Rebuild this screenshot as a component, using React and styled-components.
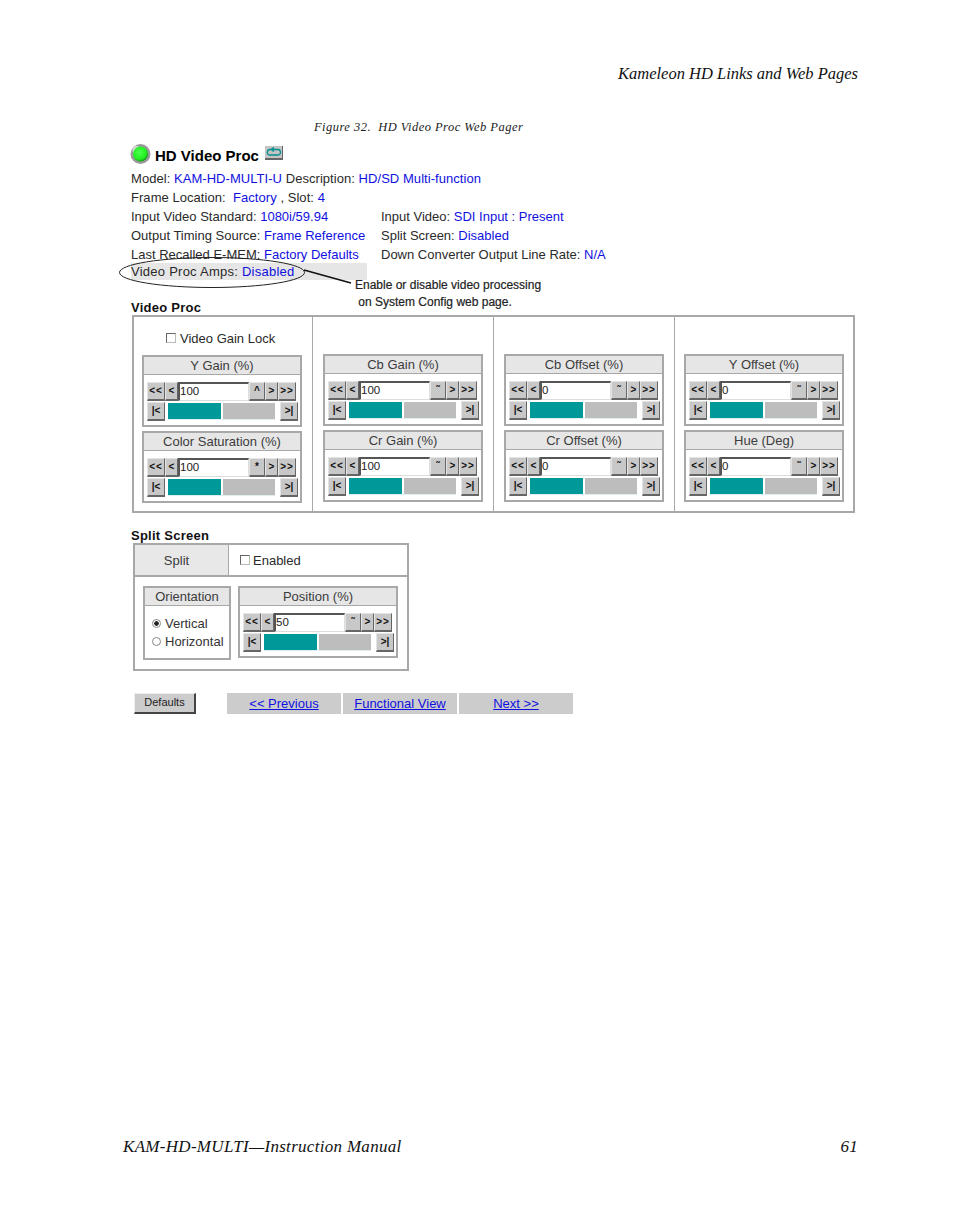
import React from "react";
import styled, { createGlobalStyle } from "styled-components";

const Global = createGlobalStyle`
  html, body { margin: 0; padding: 0; background: #fff; }
  * { box-sizing: border-box; }
`;

const Page = styled.div`
  position: relative;
  width: 954px;
  height: 1227px;
  padding: 64px 96px 0 123px;
  font-family: "Liberation Sans", Arial, sans-serif;
  font-size: 13px;
  color: #2a2a2a;
  display: flex;
  flex-direction: column;
`;
const RunHead = styled.div`
  font: italic 16.5px/20px "Liberation Serif", serif;
  color: #111;
  text-align: right;
`;
const Caption = styled.div`
  margin: 35px 0 0 191px;
  font: italic 12.5px/16px "Liberation Serif", serif;
  color: #222;
  letter-spacing: 0.47px;
`;
const Shot = styled.div`
  margin: 7px 0 0 7px;
  display: flex;
  flex-direction: column;
`;
const TitleRow = styled.div`
  display: flex;
  align-items: center;
  height: 24px;
  gap: 4px;
`;
const Title = styled.span`
  font-size: 15px;
  font-weight: 700;
  color: #000;
  padding-top: 2px;
  margin-right: 2px;
`;
const InfoLines = styled.div`
  margin: 3px 0 0 1px;
`;
const Info = styled.div`
  display: flex;
  height: ${(p) => p.$h || 18.9}px;
  align-items: center;
  white-space: pre;
  width: ${(p) => p.$w || "auto"};
  background: ${(p) => p.$bg || "transparent"};
  letter-spacing: ${(p) => p.$ls || 0.05}px;
`;
const InfoCell = styled.div`
  width: 250px;
  white-space: pre;
`;
const Val = styled.span`
  color: #1010e0;
`;
const Ring = styled.svg`
  position: absolute;
  left: 119px;
  top: 256px;
`;
const Note = styled.div`
  position: absolute;
  left: 355px;
  top: 277px;
  font-size: 12px;
  line-height: 17px;
  color: #222;
  white-space: pre;
  -webkit-text-stroke: 0.2px #222;
`;
const SectionTitle = styled.div`
  font-size: 13px;
  font-weight: 700;
  color: #111;
  line-height: 15px;
  letter-spacing: 0.25px;
  margin: ${(p) => p.$top}px 0 0 1px;
`;
const ProcTable = styled.div`
  margin: 0 0 0 2px;
  width: 723px;
  height: 198px;
  border: 2px solid #a8a8a8;
  display: grid;
  grid-template-columns: 179px 181px 181px 1fr;
`;
const ProcCol = styled.div`
  border-right: ${(p) => (p.$last ? "0" : "1px solid #a8a8a8")};
  padding: ${(p) => (p.$top ? "0" : "37px")} 0 0 ${(p) => p.$left}px;
  display: flex;
  flex-direction: column;
  gap: 4px;
`;
const LockRow = styled.label`
  height: 34px;
  display: flex;
  align-items: center;
  gap: 4px;
  padding: 8px 0 0 24px;
`;
const Check = styled.span`
  display: inline-block;
  width: 10px;
  height: 10px;
  background: #fff;
  border: 1px solid #666;
  border-right-color: #bbb;
  border-bottom-color: #bbb;
`;
const Panel = styled.div`
  width: ${(p) => p.$w || 160}px;
  height: ${(p) => p.$h || 72}px;
  border: 2px solid #a8a8a8;
  background: #fff;
  flex: none;
`;
const PanelHead = styled.div`
  height: 18px;
  background: #e6e6e6;
  border-bottom: 1px solid #a8a8a8;
  text-align: center;
  line-height: 17px;
  font-size: 13px;
  color: #3c3c3c;
`;
const Controls = styled.div`
  padding: 7px 0 0 3px;
  display: flex;
  flex-direction: column;
  gap: 1px;
`;
const CtrlRow = styled.div`
  display: flex;
  align-items: stretch;
  height: 19px;
`;
const Btn = styled.span`
  width: ${(p) => p.$w}px;
  flex: none;
  background: #c8c8c8;
  border-top: 1px solid #e4e4e4;
  border-left: 1px solid #e4e4e4;
  border-right: 1px solid #666;
  border-bottom: 2px solid #666;
  color: #111;
  font-size: 10px;
  font-weight: 700;
  line-height: 15px;
  text-align: center;
  letter-spacing: ${(p) => p.$ls || 0}px;
  white-space: pre;
`;
const NumInput = styled.span`
  width: 71px;
  flex: none;
  background: #fff;
  border-top: 2px solid #555;
  border-left: 2px solid #555;
  border-right: 1px solid #ddd;
  border-bottom: 1px solid #ddd;
  font-size: 11.5px;
  line-height: 15px;
  color: #222;
`;
const Track = styled.div`
  display: flex;
  gap: 2px;
  margin: 1px 5px 1px 3px;
  flex: none;
  width: 107px;
  height: 17px;
  border-bottom: 1px solid #dfeeee;
`;
const Fill = styled.div`
  background: ${(p) => p.$c};
  flex: 1;
`;
const SplitTable = styled.div`
  margin: 0 0 0 3px;
  width: 276px;
  height: 128px;
  border: 2px solid #a8a8a8;
  display: flex;
  flex-direction: column;
`;
const SplitTop = styled.div`
  height: 32px;
  display: flex;
  border-bottom: 2px solid #a8a8a8;
  flex: none;
`;
const SplitLabel = styled.div`
  width: 94px;
  background: #e8e8e8;
  border-right: 1px solid #a8a8a8;
  text-align: center;
  line-height: 31px;
  padding-right: 10px;
  color: #3c3c3c;
`;
const SplitOpt = styled.div`
  display: flex;
  align-items: center;
  gap: 3px;
  padding-left: 11px;
`;
const SplitBody = styled.div`
  display: flex;
  gap: 7px;
  padding: 9px 0 0 8px;
  align-items: flex-start;
`;
const Options = styled.div`
  padding: 8px 0 0 7px;
  display: flex;
  flex-direction: column;
`;
const OptRow = styled.div`
  display: flex;
  align-items: center;
  gap: 4px;
  height: 18px;
  color: #333;
`;
const Radio = styled.span`
  width: 9px;
  height: 9px;
  border-radius: 50%;
  border: 1px solid #888;
  background: ${(p) => (p.$on ? "radial-gradient(circle, #222 0 2px, #fff 2.5px)" : "#fff")};
  flex: none;
`;
const ActionBar = styled.div`
  margin: 22px 0 0 4px;
  display: flex;
  height: 21px;
`;
const DefaultsBtn = styled.span`
  width: 62px;
  background: #ccc;
  border-top: 1px solid #eee;
  border-left: 1px solid #eee;
  border-right: 2px solid #444;
  border-bottom: 2px solid #444;
  font-size: 11px;
  line-height: 16px;
  text-align: center;
  color: #222;
  margin-right: 31px;
`;
const NavCell = styled.a`
  width: 114px;
  margin-right: 2px;
  background: #ccc;
  text-align: center;
  line-height: 21px;
  color: #1010e0;
  text-decoration: underline;
`;
const Footer = styled.div`
  position: absolute;
  left: 123px;
  right: 96px;
  top: 1137px;
  display: flex;
  justify-content: space-between;
  font: italic 17px/20px "Liberation Serif", serif;
  color: #111;
  letter-spacing: 0.3px;
`;
const LoopIcon = styled.svg`
  margin-bottom: 2px;
`;

const Led = () => (
  <svg width="21" height="22" viewBox="0 0 21 22">
    <defs>
      <radialGradient id="ledg" cx="0.42" cy="0.4" r="0.6">
        <stop offset="0" stopColor="#4dff4d" />
        <stop offset="0.75" stopColor="#22f022" />
        <stop offset="1" stopColor="#12a012" />
      </radialGradient>
    </defs>
    <circle cx="10.5" cy="11" r="10" fill="#9a9a9a" />
    <circle cx="6.5" cy="7" r="4" fill="#d8d8d8" />
    <circle cx="10.5" cy="11" r="7.5" fill="url(#ledg)" />
  </svg>
);
const Loop = () => (
  <LoopIcon width="18" height="14" viewBox="0 0 18 14">
    <rect x="0" y="0" width="18" height="14" fill="#c4c4c4" />
    <rect x="0" y="12" width="18" height="2" fill="#666" />
    <rect x="17" y="0" width="1" height="14" fill="#666" />
    <path d="M5 3.5h8c3 0 3.5 5.5 0 5.5H4.5C1.5 9 1.5 3.5 5 3.5M9 1.5L6 3.5l3 2" fill="none" stroke="#008f8f" strokeWidth="1.3" />
  </LoopIcon>
);

const Spinner = ({ title, value, mid = "^" }) => (
  <Panel>
    <PanelHead>{title}</PanelHead>
    <Controls>
      <CtrlRow>
        <Btn $w={18} $ls={1}>&lt;&lt;</Btn>
        <Btn $w={13}>&lt;</Btn>
        <NumInput>{value}</NumInput>
        <Btn $w={16}>{mid}</Btn>
        <Btn $w={13}>&gt;</Btn>
        <Btn $w={18} $ls={1}>&gt;&gt;</Btn>
      </CtrlRow>
      <CtrlRow>
        <Btn $w={18}>|&lt;</Btn>
        <Track>
          <Fill $c="#009999" />
          <Fill $c="#bdbdbd" />
        </Track>
        <Btn $w={18}>&gt;|</Btn>
      </CtrlRow>
    </Controls>
  </Panel>
);

const cols = [
  { left: 8, items: [["Y Gain (%)", "100"], ["Color Saturation (%)", "100", "*"]] },
  { left: 10, items: [["Cb Gain (%)", "100", "˜"], ["Cr Gain (%)", "100", "˜"]] },
  { left: 10, items: [["Cb Offset (%)", "0", "˜"], ["Cr Offset (%)", "0", "˜"]] },
  { left: 9, items: [["Y Offset (%)", "0", "˜"], ["Hue (Deg)", "0", "˜"]] },
];

export default function App() {
  return (
    <Page>
      <Global />
      <RunHead>Kameleon HD Links and Web Pages</RunHead>
      <Caption>Figure 32.&nbsp; HD Video Proc Web Pager</Caption>
      <Shot>
        <TitleRow>
          <Led />
          <Title>HD Video Proc</Title>
          <Loop />
        </TitleRow>
        <InfoLines>
          <Info>Model: <Val>KAM-HD-MULTI-U</Val> Description: <Val>HD/SD Multi-function</Val></Info>
          <Info>Frame Location:  <Val>Factory</Val> , Slot: <Val>4</Val></Info>
          <Info $ls={0.001}>
            <InfoCell>Input Video Standard: <Val>1080i/59.94</Val></InfoCell>
            <span>Input Video: <Val>SDI Input : Present</Val></span>
          </Info>
          <Info $ls={0.001}>
            <InfoCell>Output Timing Source: <Val>Frame Reference</Val></InfoCell>
            <span>Split Screen: <Val>Disabled</Val></span>
          </Info>
          <Info $ls={0.001}>
            <InfoCell>Last Recalled E-MEM: <Val>Factory Defaults</Val></InfoCell>
            <span>Down Converter Output Line Rate: <Val>N/A</Val></span>
          </Info>
          <Info $w="236px" $bg="#e6e6e6" $h={17} $ls={0.25}>Video Proc Amps: <Val>Disabled</Val></Info>
        </InfoLines>
        <SectionTitle $top={20}>Video Proc</SectionTitle>
        <ProcTable>
          {cols.map((c, i) => (
            <ProcCol key={i} $left={c.left} $top={i === 0} $last={i === 3}>
              {i === 0 && (
                <LockRow>
                  <Check />
                  Video Gain Lock
                </LockRow>
              )}
              {c.items.map((it) => (
                <Spinner key={it[0]} title={it[0]} value={it[1]} mid={it[2]} />
              ))}
            </ProcCol>
          ))}
        </ProcTable>
        <SectionTitle $top={15}>Split Screen</SectionTitle>
        <SplitTable>
          <SplitTop>
            <SplitLabel>Split</SplitLabel>
            <SplitOpt><Check />Enabled</SplitOpt>
          </SplitTop>
          <SplitBody>
            <Panel $w={88} $h={74}>
              <PanelHead>Orientation</PanelHead>
              <Options>
                <OptRow><Radio $on />Vertical</OptRow>
                <OptRow><Radio />Horizontal</OptRow>
              </Options>
            </Panel>
            <Spinner title="Position (%)" value="50" mid="˜" />
          </SplitBody>
        </SplitTable>
        <ActionBar>
          <DefaultsBtn>Defaults</DefaultsBtn>
          <NavCell>&lt;&lt; Previous</NavCell>
          <NavCell>Functional View</NavCell>
          <NavCell>Next &gt;&gt;</NavCell>
        </ActionBar>
      </Shot>
      <Ring width="236" height="36" viewBox="0 0 236 36">
        <ellipse cx="93" cy="16.5" rx="92.5" ry="15" fill="none" stroke="#222" strokeWidth="1" />
        <path d="M185 14L232 27" stroke="#111" strokeWidth="1.6" fill="none" />
      </Ring>
      <Note>{"Enable or disable video processing\n on System Config web page."}</Note>
      <Footer>
        <span>KAM-HD-MULTI—Instruction Manual</span>
        <span>61</span>
      </Footer>
    </Page>
  );
}
